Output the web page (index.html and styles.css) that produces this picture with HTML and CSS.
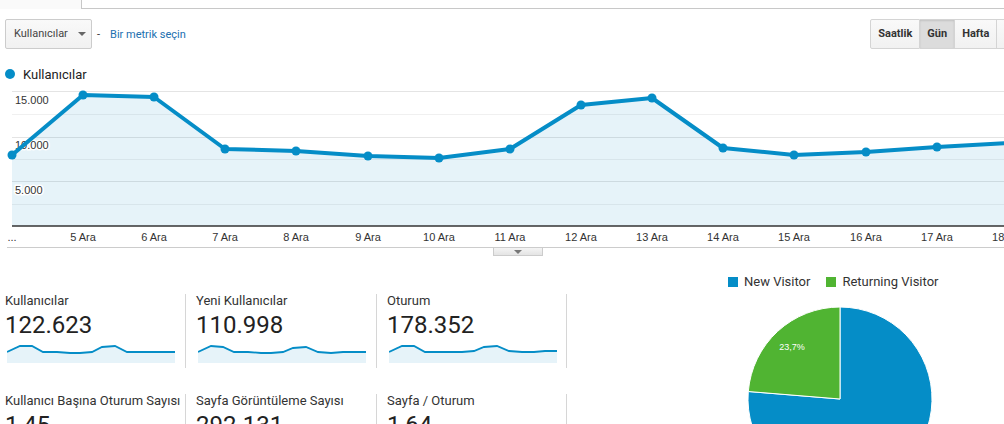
FILE: index.html
```html
<!DOCTYPE html>
<html lang="tr">
<head>
<meta charset="utf-8">
<title>Kitle Genel Bakış</title>
<link rel="stylesheet" href="styles.css">
</head>
<body>
<div class="tabs">
  <div class="tab-active"></div>
  <div class="tab-rest"></div>
</div>

<div class="toolbar">
  <div class="dropdown">Kullanıcılar <span class="caret"></span></div>
  <span class="dash">-</span>
  <a class="metric-link">Bir metrik seçin</a>
  <div class="btn-group">
    <span class="btn">Saatlik</span>
    <span class="btn active">Gün</span>
    <span class="btn">Hafta</span>
    <span class="btn">Ay</span>
  </div>
</div>

<div class="legend"><span class="legend-dot"></span>Kullanıcılar</div>

<svg class="chart" width="1004" height="162" viewBox="0 0 1004 162">
  <g stroke-width="1">
    <line x1="12" y1="6.5" x2="1004" y2="6.5" stroke="#e4e4e4"/>
    <line x1="12" y1="29.5" x2="1004" y2="29.5" stroke="#f0f0f0"/>
    <line x1="12" y1="52.5" x2="1004" y2="52.5" stroke="#e4e4e4"/>
    <line x1="12" y1="74.5" x2="1004" y2="74.5" stroke="#f0f0f0"/>
    <line x1="12" y1="96.5" x2="1004" y2="96.5" stroke="#e4e4e4"/>
    <line x1="12" y1="119.5" x2="1004" y2="119.5" stroke="#f0f0f0"/>
  </g>
  <polygon fill="#058dc7" fill-opacity="0.1" points="12,141 12,70 83,10 154,12 225,64 296,66 368,71 439,73 510,64 581,20 652,13 723,63 794,70 866,67 937,62 1010,58 1010,141"/>
  <line x1="12" y1="141" x2="1004" y2="141" stroke="#333" stroke-width="1.5"/>
  <g class="ylab">
    <text x="15" y="19">15.000</text>
    <text x="15" y="64">10.000</text>
    <text x="15" y="109">5.000</text>
  </g>
  <polyline fill="none" stroke="#058dc7" stroke-width="4" stroke-linejoin="round" points="12,70 83,10 154,12 225,64 296,66 368,71 439,73 510,64 581,20 652,13 723,63 794,70 866,67 937,62 1010,58"/>
  <g fill="#058dc7">
    <circle cx="12" cy="70" r="4.5"/><circle cx="83" cy="10" r="4.5"/><circle cx="154" cy="12" r="4.5"/>
    <circle cx="225" cy="64" r="4.5"/><circle cx="296" cy="66" r="4.5"/><circle cx="368" cy="71" r="4.5"/>
    <circle cx="439" cy="73" r="4.5"/><circle cx="510" cy="64" r="4.5"/><circle cx="581" cy="20" r="4.5"/>
    <circle cx="652" cy="13" r="4.5"/><circle cx="723" cy="63" r="4.5"/><circle cx="794" cy="70" r="4.5"/>
    <circle cx="866" cy="67" r="4.5"/><circle cx="937" cy="62" r="4.5"/>
  </g>
  <g class="xlab" text-anchor="middle">
    <text x="12" y="156">...</text>
    <text x="83" y="156">5 Ara</text>
    <text x="154" y="156">6 Ara</text>
    <text x="225" y="156">7 Ara</text>
    <text x="296" y="156">8 Ara</text>
    <text x="368" y="156">9 Ara</text>
    <text x="439" y="156">10 Ara</text>
    <text x="510" y="156">11 Ara</text>
    <text x="581" y="156">12 Ara</text>
    <text x="652" y="156">13 Ara</text>
    <text x="723" y="156">14 Ara</text>
    <text x="794" y="156">15 Ara</text>
    <text x="866" y="156">16 Ara</text>
    <text x="937" y="156">17 Ara</text>
    <text x="1008" y="156">18 Ara</text>
  </g>
</svg>
<div class="chart-foot"><span class="toggle"><span class="toggle-caret"></span></span></div>

<div class="bottom">
  <div class="metrics">
    <div class="metric first">
      <div class="m-title">Kullanıcılar</div>
      <div class="m-value">122.623</div>
      <svg class="spark" width="170" height="19" viewBox="0 0 170 19"><polygon fill="#058dc7" fill-opacity="0.1" points="0,19 0,8 13,2 25,2 36,8 50,8 63,9 73,9 85,8 95,3 108,2 120,8 133,8 145,8 156,8 168,8 168,19"/><polyline fill="none" stroke="#058dc7" stroke-width="1.8" points="0,8 13,2 25,2 36,8 50,8 63,9 73,9 85,8 95,3 108,2 120,8 133,8 145,8 156,8 168,8"/></svg>
    </div>
    <div class="metric">
      <div class="m-title">Yeni Kullanıcılar</div>
      <div class="m-value">110.998</div>
      <svg class="spark" width="170" height="19" viewBox="0 0 170 19"><polygon fill="#058dc7" fill-opacity="0.1" points="0,19 0,8 13,2 25,3 36,8 50,8 63,9 73,9 85,8 95,4 108,3 120,8 133,9 145,8 156,8 168,8 168,19"/><polyline fill="none" stroke="#058dc7" stroke-width="1.8" points="0,8 13,2 25,3 36,8 50,8 63,9 73,9 85,8 95,4 108,3 120,8 133,9 145,8 156,8 168,8"/></svg>
    </div>
    <div class="metric">
      <div class="m-title">Oturum</div>
      <div class="m-value">178.352</div>
      <svg class="spark" width="170" height="19" viewBox="0 0 170 19"><polygon fill="#058dc7" fill-opacity="0.1" points="0,19 0,8 13,2 25,2 36,8 50,8 63,8 73,8 85,7 95,3 108,2 120,7 133,8 145,8 156,7 168,7 168,19"/><polyline fill="none" stroke="#058dc7" stroke-width="1.8" points="0,8 13,2 25,2 36,8 50,8 63,8 73,8 85,7 95,3 108,2 120,7 133,8 145,8 156,7 168,7"/></svg>
    </div>
    <div class="metric first">
      <div class="m-title">Kullanıcı Başına Oturum Sayısı</div>
      <div class="m-value">1,45</div>
    </div>
    <div class="metric">
      <div class="m-title">Sayfa Görüntüleme Sayısı</div>
      <div class="m-value">292.131</div>
    </div>
    <div class="metric">
      <div class="m-title">Sayfa / Oturum</div>
      <div class="m-value">1,64</div>
    </div>
  </div>
  <div class="pie-area">
    <div class="pie-legend">
      <span class="pl-item"><span class="sq sq-blue"></span>New Visitor</span>
      <span class="pl-item"><span class="sq sq-green"></span>Returning Visitor</span>
    </div>
    <svg class="pie" width="437" height="210" viewBox="0 0 437 210">
      <path d="M273,109 L273,17 A92,92 0 1,1 181.3,101.5 Z" fill="#058dc7" stroke="#fff" stroke-width="1"/>
      <path d="M273,109 L273,17 A92,92 0 0,0 181.3,101.5 Z" fill="#50b432" stroke="#fff" stroke-width="1"/>
      <text class="pie-label" x="225" y="60" text-anchor="middle">23,7%</text>
    </svg>
  </div>
</div>
</body>
</html>
```

FILE: styles.css
```css
html, body {
  margin: 0;
  padding: 0;
}
body {
  width: 1004px;
  height: 424px;
  overflow: hidden;
  background: #fff;
  color: #333;
  font-family: Roboto, "Liberation Sans", Arial, sans-serif;
}

.tabs {
  display: flex;
  height: 9px;
}
.tab-active {
  width: 81px;
  background: #fafafa;
}
.tab-rest {
  flex: 1;
  border-left: 1px solid #c8c8c8;
  border-bottom: 1px solid #c8c8c8;
  background: #fff;
}

.toolbar {
  display: flex;
  align-items: center;
  height: 30px;
  margin-top: 10px;
  padding-left: 5px;
}
.dropdown {
  box-sizing: border-box;
  width: 87px;
  height: 30px;
  padding-left: 8px;
  border: 1px solid #ccc;
  border-radius: 2px;
  background: linear-gradient(#f9f9f9, #f1f1f1);
  font-size: 11px;
  line-height: 28px;
  color: #444;
  display: flex;
  align-items: center;
  gap: 10px;
}
.caret {
  width: 0;
  height: 0;
  border-left: 4px solid transparent;
  border-right: 4px solid transparent;
  border-top: 4px solid #666;
}
.dash {
  margin-left: 5px;
  font-size: 11px;
  color: #333;
}
.metric-link {
  margin-left: 10px;
  font-size: 11px;
  color: #2170b0;
}
.btn-group {
  display: flex;
  margin-left: auto;
  margin-right: -21px;
  height: 30px;
  flex-shrink: 0;
}
.btn {
  box-sizing: border-box;
  height: 30px;
  padding: 0 7px;
  border: 1px solid #d4d4d4;
  border-left: none;
  background: linear-gradient(#f9f9f9, #f1f1f1);
  font-size: 11px;
  font-weight: 700;
  line-height: 28px;
  color: #333;
}
.btn:first-child {
  border-left: 1px solid #d4d4d4;
  border-radius: 2px 0 0 2px;
}
.btn.active {
  background: #dcdcdc;
  box-shadow: inset 0 1px 2px rgba(0,0,0,0.12);
}

.legend {
  display: flex;
  align-items: center;
  margin-top: 17px;
  height: 16px;
  padding-left: 5px;
  font-size: 13px;
  color: #222;
}
.legend-dot {
  width: 10px;
  height: 10px;
  border-radius: 50%;
  background: #058dc7;
  margin-right: 8px;
}

.chart {
  display: block;
  margin-top: 3px;
}
.ylab text {
  font-family: "Liberation Sans", Arial, sans-serif;
  font-size: 11px;
  fill: #333;
  stroke: #fff;
  stroke-width: 3px;
  paint-order: stroke;
}
.xlab text {
  font-family: "Liberation Sans", Arial, sans-serif;
  font-size: 11px;
  fill: #333;
}

.chart-foot {
  margin-left: 7px;
  border-top: 1px solid #ccc;
  height: 8px;
}
.toggle {
  display: flex;
  justify-content: center;
  align-items: center;
  box-sizing: border-box;
  width: 50px;
  height: 8px;
  margin-left: 486px;
  border: 1px solid #ccc;
  border-top: none;
  background: linear-gradient(#f4f4f4, #e4e4e4);
}
.toggle-caret {
  width: 0;
  height: 0;
  border-left: 4px solid transparent;
  border-right: 4px solid transparent;
  border-top: 4px solid #777;
}

.bottom {
  display: flex;
  margin-top: 18px;
}
.metrics {
  width: 567px;
  display: grid;
  grid-template-columns: 186px 191px 190px;
  grid-auto-rows: 74px;
  row-gap: 26px;
  padding-top: 20px;
}
.metric {
  box-sizing: border-box;
  padding-left: 10px;
  border-right: 1px solid #d6d6d6;
}
.metric.first {
  padding-left: 5px;
}
.m-title {
  font-size: 13px;
  line-height: 14px;
  color: #333;
  white-space: nowrap;
}
.m-value {
  margin-top: 4px;
  font-size: 24px;
  line-height: 26px;
  color: #222;
}
.spark {
  display: block;
  margin-top: 6px;
  margin-left: 2px;
}

.pie-area {
  flex: 1;
}
.pie-legend {
  display: flex;
  gap: 16px;
  padding-left: 161px;
  font-size: 13px;
  line-height: 16px;
  color: #333;
}
.pl-item {
  display: flex;
  align-items: center;
}
.sq {
  width: 10px;
  height: 10px;
  margin-right: 6px;
}
.sq-blue { background: #058dc7; }
.sq-green { background: #50b432; }
.pie {
  display: block;
}
.pie-label {
  font-family: "Liberation Sans", Arial, sans-serif;
  font-size: 9px;
  fill: #fff;
}
```
